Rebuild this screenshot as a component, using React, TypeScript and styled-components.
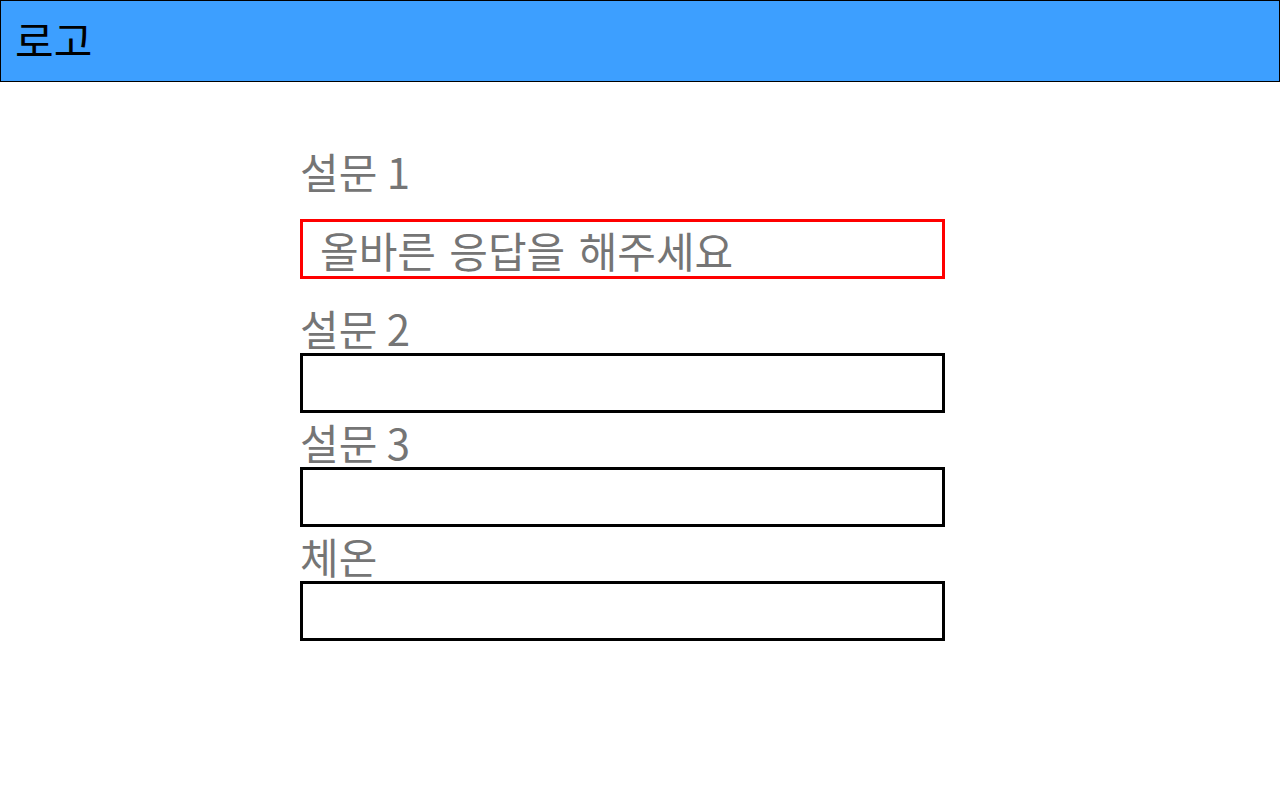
import * as React from 'react';
import styled, { createGlobalStyle } from 'styled-components';

const GlobalStyle = createGlobalStyle`
  body {
    margin: 0;
    background: #ffffff;
    font-family: "Noto Sans CJK KR", "Noto Sans", sans-serif;
  }
`;

const Header = styled.header`
  height: 80px;
  border: 1px solid #000000;
  background: #3d9fff;
  display: flex;
  align-items: center;
  padding: 0 14px;
`;

const Logo = styled.h1`
  margin: 0 0 4px;
  font-size: 42px;
  font-weight: 400;
  color: #000000;
  line-height: 1;
`;

const Form = styled.form`
  display: flex;
  flex-direction: column;
  width: 645px;
  margin-left: 300px;
  padding-top: 64px;
`;

const Field = styled.div<{ $error?: boolean }>`
  display: flex;
  flex-direction: column;
  gap: ${(p) => (p.$error ? '23px' : '0')};
  margin-bottom: ${(p) => (p.$error ? '24px' : '4px')};
`;

const Label = styled.label`
  font-size: 42px;
  line-height: 50px;
  color: #757575;
`;

const Box = styled.div<{ $error?: boolean }>`
  box-sizing: border-box;
  height: 60px;
  border: 3px solid ${(p) => (p.$error ? '#ff0000' : '#000000')};
  display: flex;
  align-items: center;
  padding: 0 17px;
  font-size: 42px;
  word-spacing: 4px;
  color: #757575;
`;

const FIELDS = [
  { label: '설문 1', error: '올바른 응답을 해주세요' },
  { label: '설문 2' },
  { label: '설문 3' },
  { label: '체온' },
];

export default function App() {
  return (
    <>
      <GlobalStyle />
      <Header>
        <Logo>로고</Logo>
      </Header>
      <Form>
        {FIELDS.map((f) => (
          <Field key={f.label} $error={!!f.error}>
            <Label>{f.label}</Label>
            <Box $error={!!f.error}>{f.error}</Box>
          </Field>
        ))}
      </Form>
    </>
  );
}
